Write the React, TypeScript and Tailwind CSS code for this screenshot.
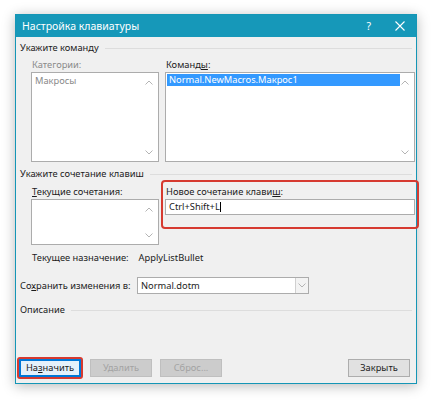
import type { ReactNode } from "react"

const font = { fontFamily: '"Noto Sans", "Open Sans", sans-serif' }

/* small scroll-arrow chevrons used inside list boxes */
function Chevron({ up = false }: { up?: boolean }) {
    return (
        <svg width="8" height="5" viewBox="0 0 8 5">
            <path
                d={up ? "M0.5 4.5 L4 1 L7.5 4.5" : "M0.5 0.5 L4 4 L7.5 0.5"}
                fill="none"
                stroke="#b4b4b4"
                strokeWidth="1"
            />
        </svg>
    )
}

function ListBox({ className, children }: { className: string; children?: ReactNode }) {
    return (
        <div className={`relative bg-white border border-[#acacac] ${className}`}>
            {children}
            <div className="absolute right-[5px] top-[7px] flex">
                <Chevron up />
            </div>
            <div className="absolute right-[5px] bottom-[6px] flex">
                <Chevron />
            </div>
        </div>
    )
}

function GroupTitle({ children }: { children: ReactNode }) {
    return (
        <div className="flex items-center gap-[6px] pr-[4px] h-[14px]">
            <span className="text-[9.3px] leading-[14px] text-[#1b1b1b] whitespace-nowrap">{children}</span>
            <div className="flex-1 h-px bg-[#dddddd]" />
        </div>
    )
}

function Button({ children, disabled = false, focused = false }: { children: ReactNode; disabled?: boolean; focused?: boolean }) {
    const base = "w-[62px] h-[18px] flex items-center justify-center text-[9.3px] leading-none"
    if (disabled) return <div className={`${base} bg-[#cccccc] border border-[#bfbfbf] text-[#a3a3a3]`}>{children}</div>
    if (focused) return <div className={`${base} bg-[#e5f1fb] border-2 border-[#0078d7] text-[#1b1b1b]`}>{children}</div>
    return <div className={`${base} bg-[#e1e1e1] border border-[#adadad] text-[#1b1b1b]`}>{children}</div>
}

export default function App() {
    return (
        <div className="w-[434px] h-[402px] bg-white overflow-hidden" style={font}>
            <div className="ml-[15px] mt-[14px] w-[402px] h-[370px] flex flex-col bg-[#f0f0f0] border border-[#1596b6] shadow-[0_2px_12px_rgba(0,0,0,0.28)]">
                {/* ── title bar ─────────────────────────────────────────── */}
                <div className="h-[22px] shrink-0 bg-[#1698b9] flex items-center pl-[6px] text-white">
                    <span className="text-[10.5px] leading-none">Настройка клавиатуры</span>
                    <span className="ml-auto text-[10.5px] leading-none mr-[24px]">?</span>
                    <svg width="10" height="10" viewBox="0 0 10 10" className="mr-[11px]">
                        <path d="M0.5 0.5 L9.5 9.5 M9.5 0.5 L0.5 9.5" stroke="white" strokeWidth="1.1" />
                    </svg>
                </div>

                <div className="flex-1 flex flex-col pl-[4px] pt-[4px]">
                    {/* ── command ───────────────────────────────────────── */}
                    <GroupTitle>Укажите команду</GroupTitle>
                    <div className="flex mt-[3px] pl-[11px]">
                        <div className="w-[128px]">
                            <div className="text-[9.3px] leading-[14px] text-[#8a8a8a] pl-[1px]">Категории:</div>
                            <ListBox className="w-[128px] h-[90px]">
                                <div className="text-[9.3px] leading-[14px] text-[#8a8a8a] pl-[3px] pt-[1px]">Макросы</div>
                            </ListBox>
                        </div>
                        <div className="ml-[6px] w-[250px]">
                            <div className="text-[9.3px] leading-[14px] text-[#1b1b1b] pl-[1px]">
                                Команд<span className="underline">ы</span>:
                            </div>
                            <ListBox className="w-[250px] h-[90px]">
                                <div className="mt-[1px] ml-[1px] w-[233px] h-[12px] bg-[#3399ff] text-white text-[9.3px] leading-[12px] pl-[2px]">
                                    Normal.NewMacros.Макрос1
                                </div>
                            </ListBox>
                        </div>
                    </div>

                    {/* ── shortcut ──────────────────────────────────────── */}
                    <div className="mt-[5px]">
                        <GroupTitle>Укажите сочетание клавиш</GroupTitle>
                    </div>
                    <div className="flex items-start pl-[11px]">
                        <div className="w-[128px] pt-[4px]">
                            <div className="text-[9.3px] leading-[14px] text-[#1b1b1b] pl-[1px]">
                                <span className="underline">Т</span>екущие сочетания:
                            </div>
                            <ListBox className="w-[128px] h-[46px]" />
                        </div>
                        <div className="ml-[2px] -mt-[1px] w-[258px] h-[49px] border-2 border-[#d63a30] rounded-[4px] px-[2px] pt-[3px]">
                            <div className="text-[9.3px] leading-[14px] text-[#1b1b1b] pl-[1px]">
                                Новое сочетание клави<span className="underline">ш</span>:
                            </div>
                            <div className="w-[250px] h-[16px] bg-white border border-[#acacac] flex items-center pl-[3px] text-[9.3px] text-[#1b1b1b]">
                                Ctrl+Shift+L<span className="w-px h-[10px] bg-black" />
                            </div>
                        </div>
                    </div>

                    <div className="flex mt-[6px] pl-[12px] text-[9.3px] leading-[14px] text-[#1b1b1b]">
                        <span>Текущее назначение:</span>
                        <span className="ml-[10px]">ApplyListBullet</span>
                    </div>

                    {/* ── save target ───────────────────────────────────── */}
                    <div className="flex items-center mt-[12px]">
                        <span className="text-[9.3px] leading-[14px] text-[#1b1b1b] w-[117px] whitespace-nowrap">
                            Со<span className="underline">х</span>ранить изменения в:
                        </span>
                        <div className="w-[172px] h-[17px] bg-white border border-[#acacac] flex items-center">
                            <span className="flex-1 pl-[3px] text-[9.3px] text-[#1b1b1b]">Normal.dotm</span>
                            <div className="w-[13px] h-full border-l border-[#d0d0d0] bg-[#f3f3f3] flex items-center justify-center">
                                <Chevron />
                            </div>
                        </div>
                    </div>

                    <div className="mt-[9px]">
                        <GroupTitle>Описание</GroupTitle>
                    </div>

                    {/* ── buttons ───────────────────────────────────────── */}
                    <div className="mt-auto mb-[4px] flex items-center">
                        <div className="border-2 border-[#d63a30] rounded-[3px] -ml-[3px]">
                            <Button focused>
                                На<span className="underline">з</span>начить
                            </Button>
                        </div>
                        <div className="ml-[7px]">
                            <Button disabled>Удалить</Button>
                        </div>
                        <div className="ml-[8px]">
                            <Button disabled>Сброс...</Button>
                        </div>
                        <div className="ml-auto mr-[6px]">
                            <Button>Закрыть</Button>
                        </div>
                    </div>
                </div>
            </div>
        </div>
    )
}
